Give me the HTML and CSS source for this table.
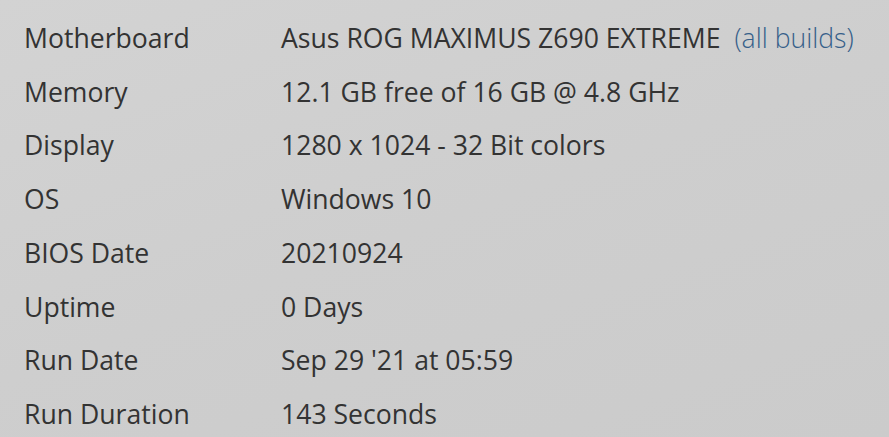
FILE: index.html
```html
<!DOCTYPE html>
<html lang="en">
<head>
<meta charset="utf-8">
<title>System Info</title>
<link rel="stylesheet" href="styles.css">
</head>
<body>
<dl class="info">
  <div class="row"><dt>Motherboard</dt><dd>Asus ROG MAXIMUS Z690 EXTREME <a class="link" href="#">(all builds)</a></dd></div>
  <div class="row"><dt>Memory</dt><dd>12.1 GB free of 16 GB @ 4.8 GHz</dd></div>
  <div class="row"><dt>Display</dt><dd>1280 x 1024 - 32 Bit colors</dd></div>
  <div class="row"><dt>OS</dt><dd>Windows 10</dd></div>
  <div class="row"><dt>BIOS Date</dt><dd>20210924</dd></div>
  <div class="row"><dt>Uptime</dt><dd>0 Days</dd></div>
  <div class="row"><dt>Run Date</dt><dd>Sep 29 '21 at 05:59</dd></div>
  <div class="row"><dt>Run Duration</dt><dd>143 Seconds</dd></div>
</dl>
</body>
</html>
```
FILE: styles.css
```css
html, body {
  margin: 0;
  padding: 0;
  height: 100%;
}
body {
  background: linear-gradient(160deg, #d3d3d3 0%, #cecece 50%, #cbcbcb 100%);
  font-family: "Open Sans", "Noto Sans", sans-serif;
  color: #333333;
  overflow: hidden;
}
.info {
  margin: 0;
  padding: 12px 0 0 24px;
  display: flex;
  flex-direction: column;
}
.row {
  display: grid;
  grid-template-columns: 257px 1fr;
  font-size: 26.6px;
  line-height: 53.7px;
}
dt, dd {
  margin: 0;
  white-space: nowrap;
}
.link {
  color: #365f8a;
  text-decoration: none;
  font-weight: 300;
  margin-left: 7px;
}
```
